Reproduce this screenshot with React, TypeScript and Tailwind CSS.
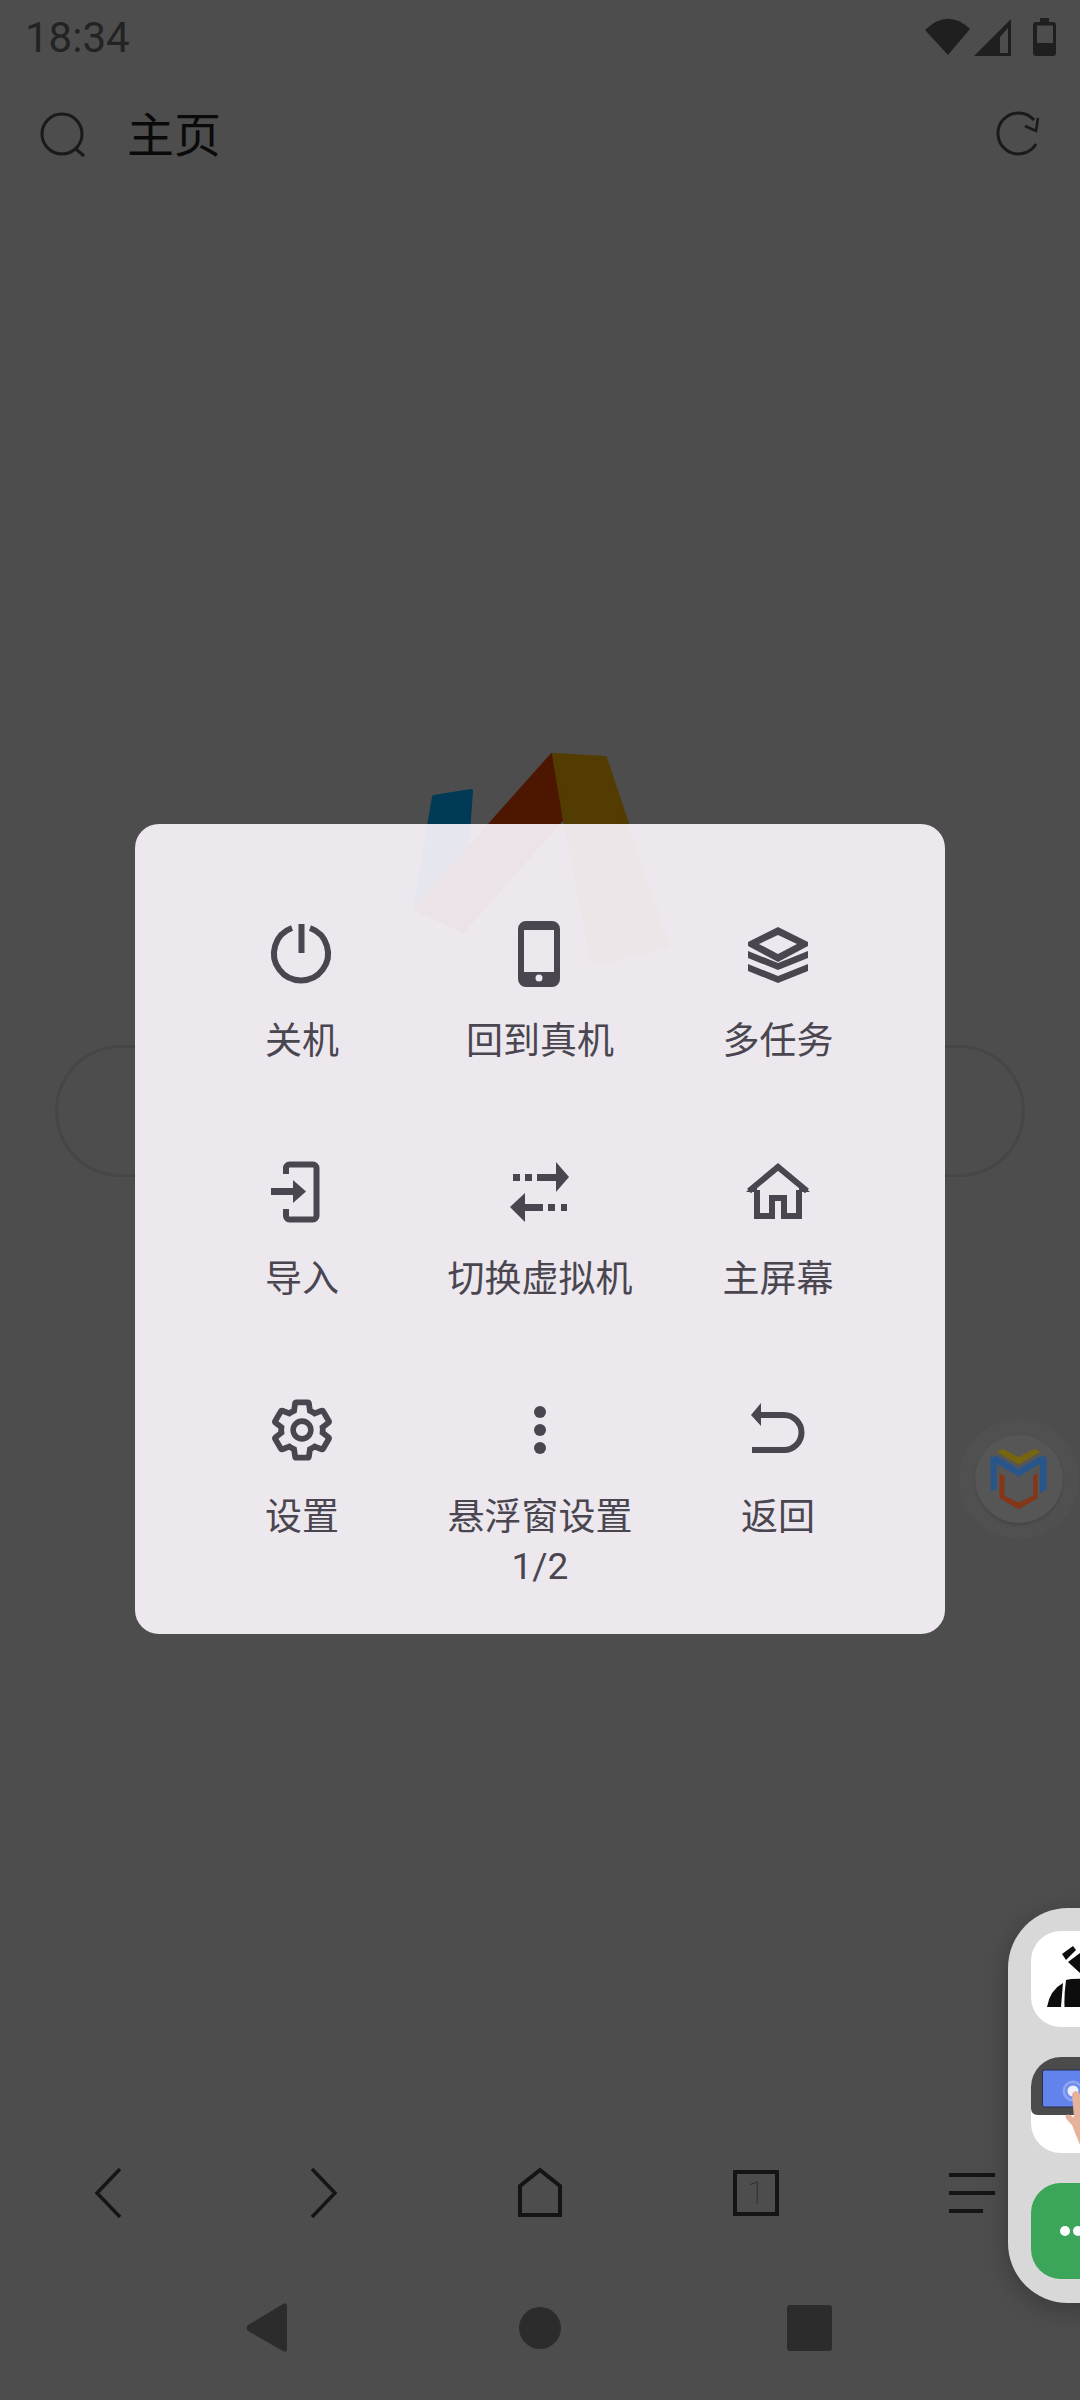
import React from "react";

const INK = "#4a4650";

function PowerIcon() {
  return (
    <svg width="72" height="72" viewBox="266 918 72 72" fill="none" stroke={INK} strokeWidth="6">
      <path d="M292 928A27 27 0 1 0 310 928" />
      <path d="M301.500 924V953" />
    </svg>
  );
}
function PhoneIcon() {
  return (
    <svg width="72" height="72" viewBox="504 918 72 72">
      <path fillRule="evenodd" fill={INK} d="M526 921h26a8 8 0 0 1 8 8v50a8 8 0 0 1-8 8h-26a8 8 0 0 1-8-8v-50a8 8 0 0 1 8-8zM524 930v42h30v-42z" />
      <circle cx="539" cy="978" r="3.500" fill="#ece8ee" />
    </svg>
  );
}
function LayersIcon() {
  return (
    <svg width="72" height="72" viewBox="742 918 72 72" fill={INK}>
      <path fillRule="evenodd" d="M778 927l30 15v4l-30 16-30-16v-4zM778 935l-19 9 19 10 19-10z" />
      <path d="M748 951l30 12 30-12v7l-30 12-30-12z" />
      <path d="M748 964l30 12 30-12v7l-30 12-30-12z" />
    </svg>
  );
}
function ImportIcon() {
  return (
    <svg width="72" height="72" viewBox="266 1156 72 72" fill="none" stroke={INK} strokeWidth="6">
      <path d="M286 1174V1168a3.500 3.500 0 0 1 3.500-3.500H313a3.500 3.500 0 0 1 3.500 3.500V1216a3.500 3.500 0 0 1-3.500 3.500H289.500a3.500 3.500 0 0 1-3.500-3.500V1209" />
      <path d="M271 1191.500H296" strokeWidth="7" />
      <path d="M293 1180L306 1191.500L293 1203Z" fill={INK} stroke="none" />
    </svg>
  );
}
function SwapIcon() {
  return (
    <svg width="72" height="72" viewBox="504 1156 72 72" fill={INK}>
      <path d="M513 1174h7v7h-7zM525 1174h7v7h-7zM537 1174h19v-12l13 15-13 15v-11h-19z" />
      <path d="M561 1204h6v7h-6zM548 1204h7v7h-7zM543 1204v7h-18v11l-15-15 15-14v11z" />
    </svg>
  );
}
function HomeIcon() {
  return (
    <svg width="72" height="72" viewBox="742 1156 72 72" fill="none" stroke={INK} strokeWidth="6">
      <path d="M757 1190V1216H772V1198H784V1216H799V1190" />
      <path d="M749 1191L778 1167L807 1191" />
      <path d="M746 1192L757 1182V1192ZM810 1192L799 1182V1192Z" fill={INK} stroke="none" />
    </svg>
  );
}
function GearIcon() {
  return (
    <svg width="72" height="72" viewBox="-1 -1 26 26">
      <path
        fill="none"
        stroke={INK}
        strokeWidth="2.100"
        d="M19.430 12.980c.04-.32.07-.64.07-.98s-.03-.66-.07-.98l2.110-1.650c.19-.15.24-.42.120-.64l-2-3.460c-.12-.22-.39-.3-.61-.22l-2.490 1c-.52-.4-1.080-.73-1.690-.98l-.38-2.650C14.460 2.180 14.250 2 14 2h-4c-.25 0-.46.18-.49.42l-.38 2.650c-.61.25-1.170.59-1.690.98l-2.490-1c-.23-.09-.49 0-.61.22l-2 3.460c-.13.22-.07.49.12.64l2.110 1.650c-.04.32-.07.65-.07.98s.03.66.07.98l-2.110 1.650c-.19.15-.24.42-.12.64l2 3.460c.12.22.39.3.61.22l2.490-1c.52.4 1.080.73 1.690.98l.38 2.650c.03.24.24.42.49.42h4c.25 0 .46-.18.49-.42l.38-2.650c.61-.25 1.170-.59 1.690-.98l2.490 1c.23.09.49 0 .61-.22l2-3.460c.12-.22.07-.49-.12-.64l-2.110-1.650z"
      />
      <circle cx="12" cy="12" r="3.200" fill="none" stroke={INK} strokeWidth="2" />
    </svg>
  );
}
function DotsIcon() {
  return (
    <svg width="72" height="72" viewBox="504 1394 72 72" fill={INK}>
      <circle cx="540" cy="1412" r="6" />
      <circle cx="540" cy="1430" r="6" />
      <circle cx="540" cy="1448" r="6" />
    </svg>
  );
}
function BackIcon() {
  return (
    <svg width="72" height="72" viewBox="742 1394 72 72" fill="none" stroke={INK} strokeWidth="6">
      <path d="M760 1415H784a17.500 17.500 0 0 1 0 35H752" />
      <path d="M761 1403L751 1415L761 1426Z" fill={INK} stroke="none" />
    </svg>
  );
}

const items: { icon: React.ReactNode; label: React.ReactNode }[] = [
  { icon: <PowerIcon />, label: "关机" },
  { icon: <PhoneIcon />, label: "回到真机" },
  { icon: <LayersIcon />, label: "多任务" },
  { icon: <ImportIcon />, label: "导入" },
  { icon: <SwapIcon />, label: "切换虚拟机" },
  { icon: <HomeIcon />, label: "主屏幕" },
  { icon: <GearIcon />, label: "设置" },
  { icon: <DotsIcon />, label: "悬浮窗设置" },
  { icon: <BackIcon />, label: "返回" },
];

function StatusIcons() {
  return (
    <svg width="140" height="48" viewBox="920 12 140 48" fill="#1f1f1f">
      <path d="M925 28Q948 6 970 27L948 53Z" />
      <path fillRule="evenodd" d="M974 54L1011 17V54ZM1000 51H1008V26L1000 35Z" />
      <path
        fillRule="evenodd"
        d="M1040 16h9v4h4a3 3 0 0 1 3 3v28a3 3 0 0 1-3 3h-17a3 3 0 0 1-3-3v-28a3 3 0 0 1 3-3h4zM1037 23.500v17.500h16v-17.500z"
      />
    </svg>
  );
}

export default function App() {
  return (
    <div
      className="relative w-[1080px] h-[2400px] overflow-hidden bg-[#4d4d4d] flex flex-col"
      style={{ fontFamily: 'Roboto, "Noto Sans CJK SC", sans-serif' }}
    >
      {/* Status bar */}
      <div className="h-[76px] pl-[25px] pr-[20px] flex items-center justify-between shrink-0">
        <span className="text-[42px] leading-none text-[#232323]">18:34</span>
        <StatusIcons />
      </div>

      {/* Header */}
      <div className="h-[118px] pl-[36px] pr-[36px] flex items-center justify-between shrink-0">
        <div className="flex items-center gap-[36px]">
          <svg width="55" height="55" viewBox="36 108 55 55" fill="none" stroke="#1a1a1a" strokeWidth="3">
            <circle cx="62" cy="134" r="20" />
            <path d="M76 149L84 156" />
          </svg>
          <span className="text-[47px] leading-none text-[#0a0a0a]">主页</span>
        </div>
        <svg width="55" height="55" viewBox="990 108 55 55" fill="none" stroke="#1a1a1a" strokeWidth="3">
          <path d="M1035 120A20.500 20.500 0 1 0 1037 144" />
          <path d="M1026 126L1037 131L1039 118" strokeWidth="2.500" />
        </svg>
      </div>

      {/* Page body */}
      <div className="flex-1 flex flex-col">
        <svg className="ml-[410px] mt-[556px] block" width="262" height="220" viewBox="410 750 262 220">
          <g strokeLinejoin="round" strokeWidth="4">
            <path d="M434 797L471 791L467 845L415 908Z" fill="#003a57" stroke="#003a57" />
            <path d="M552 755L561 820L463 931L415 909Z" fill="#4c1600" stroke="#4c1600" />
            <path d="M554 755L605 758L668 946L593 965L565 820Z" fill="#523c02" stroke="#523c02" />
          </g>
        </svg>
        <div className="ml-[55px] mt-[75px] w-[970px] h-[132px] rounded-full border-[3px] border-[#464646]" />
      </div>

      {/* Browser toolbar */}
      <div className="h-[60px] grid grid-cols-5 items-center justify-items-center shrink-0">
        <svg width="60" height="60" viewBox="78 2163 60 60" fill="none" stroke="#151515" strokeWidth="3.500">
          <path d="M120 2169L97 2193L120 2217" />
        </svg>
        <svg width="60" height="60" viewBox="294 2163 60 60" fill="none" stroke="#151515" strokeWidth="3.500">
          <path d="M312 2169L335 2193L312 2217" />
        </svg>
        <svg width="60" height="60" viewBox="510 2163 60 60" fill="none" stroke="#151515" strokeWidth="4">
          <path d="M520 2215H560V2186L540 2170L520 2186Z" />
        </svg>
        <div className="w-[46px] h-[46px] border-[4px] border-[#151515] flex items-center justify-center">
          <span className="text-[32px] leading-none font-thin text-[#2a2a2a]">1</span>
        </div>
        <div className="w-[46px] flex flex-col gap-[14px]">
          <div className="h-[4px] bg-[#151515]" />
          <div className="h-[4px] bg-[#151515]" />
          <div className="h-[4px] w-[34px] bg-[#151515]" />
        </div>
      </div>

      {/* System navigation */}
      <div className="mt-[75px] mb-[42px] h-[60px] flex justify-center gap-[212px] shrink-0">
        <svg width="60" height="60" viewBox="238 2298 60 60" fill="#2c2c2c">
          <path d="M283 2304Q287 2302 287 2306V2349Q287 2353 283 2351L248 2331Q245 2328 248 2325Z" />
        </svg>
        <svg width="60" height="60" viewBox="510 2298 60 60" fill="#2c2c2c">
          <circle cx="540" cy="2328" r="21" />
        </svg>
        <svg width="60" height="60" viewBox="782 2298 60 60" fill="#2c2c2c">
          <rect x="787" y="2305" width="45" height="46" rx="3" />
        </svg>
      </div>

      {/* Floating ball */}
      <div className="absolute left-[959px] top-[1419px] w-[120px] h-[120px] rounded-full bg-[#505050] flex items-center justify-center">
        <div className="w-[88px] h-[88px] rounded-full bg-[#565656] shadow-[0_2px_3px_rgba(0,0,0,0.15)] flex items-center justify-center">
          <svg width="64" height="68" viewBox="143 135 190 200">
            <path d="M172 155L190 145L237 170L285 145L302 155L237 192Z" fill="#76660f" />
            <path d="M153 172L170 165L237 205L305 165L320 172V265L300 277V190L237 228L172 190V265L155 272Z" fill="#28568a" />
            <path d="M180 218L195 225V285L237 305L280 285V225L293 218V292L237 325L180 292Z" fill="#843618" />
          </svg>
        </div>
      </div>

      {/* Side dock */}
      <div className="absolute left-[1008px] top-[1908px] w-[110px] h-[395px] rounded-l-[60px] bg-[#d8d8d8] shadow-[0_6px_24px_rgba(0,0,0,0.25)] flex flex-col gap-[30px] pt-[23px] pl-[23px]">
        <div className="w-[96px] h-[96px] rounded-[30px] bg-white overflow-hidden shrink-0">
          <svg width="96" height="96" viewBox="1031 1931 96 96" fill="#0d0d0d">
            <path d="M1062 1954L1073 1946L1076 1950L1066 1960Z" />
            <path d="M1068 1962L1084 1950V1976L1080 1973Z" />
            <path d="M1047 2007Q1050 1990 1063 1983L1061 2007Z" />
            <path d="M1066 1980Q1072 1978 1090 1979V2007H1064.500Q1064 1995 1066 1980Z" />
          </svg>
        </div>
        <div className="w-[96px] h-[96px] rounded-[30px] bg-white overflow-hidden shrink-0">
          <svg width="96" height="96" viewBox="1031 2057 96 96">
            <path d="M1031 2057H1127V2115H1038Q1031 2115 1031 2108Z" fill="#4b4b4b" />
            <rect x="1042.500" y="2070" width="70" height="37" rx="2" fill="#6383ec" stroke="#26304f" strokeWidth="1" />
            <circle cx="1073" cy="2091" r="10.500" fill="#8ea5f2" />
            <circle cx="1073" cy="2091" r="8" fill="#6f8dee" />
            <circle cx="1073" cy="2091" r="5.500" fill="#eef1fb" />
            <path d="M1072 2094Q1076 2088 1080 2094L1090 2105V2145H1080L1072 2125Q1064 2118 1066 2115Q1070 2113 1074 2118Z" fill="#e6b29b" />
          </svg>
        </div>
        <div className="w-[96px] h-[96px] rounded-[30px] bg-[#3ba65a] shrink-0 flex items-center pl-[29px] gap-[3px]">
          <div className="w-[10px] h-[10px] rounded-full bg-white" />
          <div className="w-[10px] h-[10px] rounded-full bg-white" />
        </div>
      </div>

      {/* Dialog */}
      <div className="absolute left-[135px] top-[824px] w-[810px] h-[810px] rounded-[24px] bg-[rgba(250,245,252,0.92)] pt-[58px] px-[48px]">
        <div className="grid grid-cols-3 auto-rows-[238px]">
          {items.map((item, i) => (
            <div key={i} className="flex flex-col items-center pt-[36px]">
              {item.icon}
              <div className="mt-[27px] text-[37px] leading-[49px] text-center text-[#4a4650]">
                {item.label}
                {i === 7 && <div>1/2</div>}
              </div>
            </div>
          ))}
        </div>
      </div>
    </div>
  );
}
